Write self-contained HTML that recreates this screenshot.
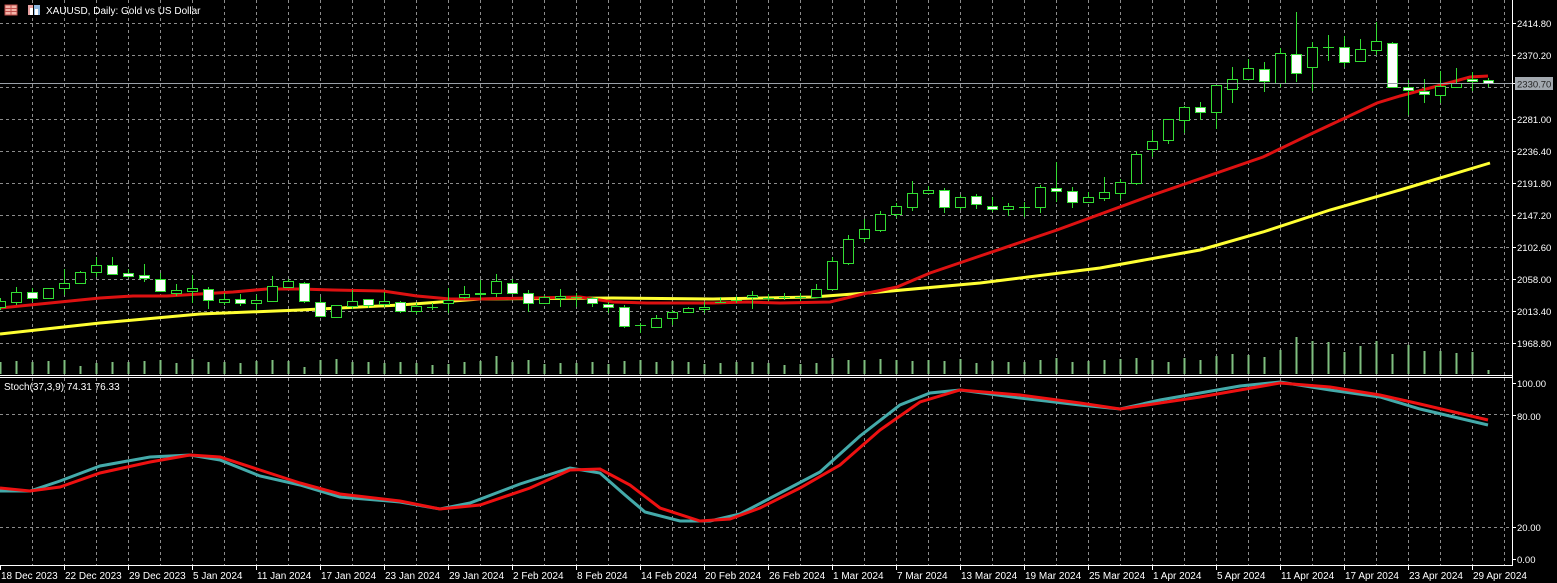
<!DOCTYPE html>
<html><head><meta charset="utf-8"><style>
html,body{margin:0;padding:0;background:#000;width:1557px;height:583px;overflow:hidden}
svg{display:block}
text{font-family:"Liberation Sans",sans-serif;fill:#fff}
</style></head><body>
<svg id="s" width="1557" height="583" xmlns="http://www.w3.org/2000/svg" shape-rendering="crispEdges">
<g id="grid"></g>
<g id="vol"></g>
<polyline fill="none" stroke="#ffff33" stroke-width="3" shape-rendering="auto" points="0,334 100,323 200,314 300,310 400,305 480,299 613,298 713,299 813,297 880,292 980,283 1100,268 1200,250 1263,232 1330,210 1400,190 1490,163"/>
<polyline fill="none" stroke="#dd1111" stroke-width="3" shape-rendering="auto" points="0,308 100,298 133,296 167,296 233,292 267,289 300,289 333,290 383,291 417,296 450,299 480,299 580,297 613,302 647,303 713,303 747,302 780,303 830,302 863,294 897,287 930,273 980,256 1057,230 1147,197 1263,157 1313,133 1377,103 1400,96 1430,88 1470,77 1488,76"/>
<g id="candles"></g>
<line x1="0" y1="83.5" x2="1512" y2="83.5" stroke="#9aa0a8"/>
<line x1="0" y1="375.5" x2="1512" y2="375.5" stroke="#fff"/>
<line x1="0" y1="377.5" x2="1512" y2="377.5" stroke="#fff"/>
<line x1="0" y1="565.5" x2="1513" y2="565.5" stroke="#fff"/>
<line x1="1512.5" y1="0" x2="1512.5" y2="566" stroke="#fff"/>
<polyline fill="none" stroke="#44aaaa" stroke-width="3" shape-rendering="auto" points="0,491 30,491 60,481 100,466 150,457 190,455 220,460 260,476 300,485 340,497 400,502 440,509 470,503 520,484 570,468 600,473 625,495 645,512 680,521 710,521 740,514 780,493 820,472 860,436 900,405 930,393 960,390 1020,398 1080,405 1120,409 1160,400 1200,393 1240,386 1280,382 1330,390 1380,397 1420,409 1488,425"/>
<polyline fill="none" stroke="#ee1111" stroke-width="3" shape-rendering="auto" points="0,488 30,491 60,487 100,473 150,462 190,455 220,457 260,470 300,483 340,494 400,501 440,509 480,505 530,488 570,470 600,469 630,485 660,508 700,521 730,519 760,508 800,488 840,465 880,430 920,402 960,390 1020,395 1080,403 1120,409 1160,403 1200,397 1240,390 1280,383 1330,387 1380,395 1420,404 1488,420"/>
<g shape-rendering="auto">
<rect x="5" y="5" width="12" height="10" fill="#f3b3a8" stroke="#c0504d"/>
<line x1="5" y1="8.5" x2="17" y2="8.5" stroke="#c0504d"/><line x1="5" y1="11.5" x2="17" y2="11.5" stroke="#c0504d"/><line x1="11" y1="5" x2="11" y2="15" stroke="#c0504d"/>
<rect x="28" y="5" width="5" height="10" fill="#e8a0a0"/><rect x="34" y="5" width="6" height="10" fill="#8fb8e0"/><rect x="30" y="8" width="3" height="7" fill="#fff"/><rect x="35" y="9" width="3" height="6" fill="#fff"/>
</g>
<text x="46" y="14" font-size="10">XAUUSD, Daily:  Gold vs US Dollar</text>
<text x="4" y="390" font-size="10">Stoch(37,3,9) 74.31 76.33</text>
<g id="ticks" stroke="#fff"></g>
<g font-size="9.5">
<text x="1517" y="27">2414.80</text>
<text x="1517" y="59">2370.20</text>
<text x="1517" y="123">2281.00</text>
<text x="1517" y="155">2236.40</text>
<text x="1517" y="187">2191.80</text>
<text x="1517" y="219">2147.20</text>
<text x="1517" y="251">2102.60</text>
<text x="1517" y="283">2058.00</text>
<text x="1517" y="315">2013.40</text>
<text x="1517" y="347">1968.80</text>
<text x="1517" y="387">100.00</text>
<text x="1517" y="420">80.00</text>
<text x="1517" y="531">20.00</text>
<text x="1517" y="563">0.00</text>
</g>
<rect x="1515" y="77" width="38" height="13" fill="#a3a9b0"/>
<text x="1517" y="87.5" font-size="9.5" style="fill:#222">2330.70</text>
<g font-size="10" id="dates">
<text x="1" y="579">18 Dec 2023</text><text x="65" y="579">22 Dec 2023</text><text x="129" y="579">29 Dec 2023</text><text x="193" y="579">5 Jan 2024</text><text x="257" y="579">11 Jan 2024</text><text x="321" y="579">17 Jan 2024</text><text x="385" y="579">23 Jan 2024</text><text x="449" y="579">29 Jan 2024</text><text x="513" y="579">2 Feb 2024</text><text x="577" y="579">8 Feb 2024</text><text x="641" y="579">14 Feb 2024</text><text x="705" y="579">20 Feb 2024</text><text x="769" y="579">26 Feb 2024</text><text x="833" y="579">1 Mar 2024</text><text x="897" y="579">7 Mar 2024</text><text x="961" y="579">13 Mar 2024</text><text x="1025" y="579">19 Mar 2024</text><text x="1089" y="579">25 Mar 2024</text><text x="1153" y="579">1 Apr 2024</text><text x="1217" y="579">5 Apr 2024</text><text x="1281" y="579">11 Apr 2024</text><text x="1345" y="579">17 Apr 2024</text><text x="1409" y="579">23 Apr 2024</text><text x="1473" y="579">29 Apr 2024</text>
</g>
</svg>
<script>
var NS="http://www.w3.org/2000/svg";
function el(p,t,a){var e=document.createElementNS(NS,t);for(var k in a)e.setAttribute(k,a[k]);p.appendChild(e);return e;}
var g=document.getElementById('grid');
var dash={stroke:"#8c8c8c","stroke-dasharray":"3,3","stroke-width":1};
for(var x=32;x<1512;x+=32){el(g,'line',Object.assign({x1:x+.5,y1:0,x2:x+.5,y2:375},dash));el(g,'line',Object.assign({x1:x+.5,y1:378,x2:x+.5,y2:565},dash));}
for(var y=23;y<=343;y+=32){el(g,'line',Object.assign({x1:0,y1:y+.5,x2:1512,y2:y+.5},dash));}
[414,527].forEach(function(y){el(g,'line',Object.assign({x1:0,y1:y+.5,x2:1512,y2:y+.5},dash));});
var t=document.getElementById('ticks');
[23,55,83,119,151,183,215,247,279,311,343,383,415,527,559].forEach(function(y){el(t,'line',{x1:1512,y1:y+.5,x2:1516,y2:y+.5});});
for(var x=0;x<=1472;x+=64){el(t,'line',{x1:x+.5,y1:565,x2:x+.5,y2:570});}
var D=[[301,307,298,310,0],[292,302,287,305,0],[292,298,288,302,1],[288,298,288,298,0],[283,288,269,295,0],[272,283,271,283,0],[265,272,257,277,0],[265,274,257,274,1],[273,276,269,278,1],[275,278,264,282,1],[279,291,273,292,1],[290,293,284,296,0],[288,291,275,303,0],[289,300,287,309,1],[299,302,293,305,0],[299,303,294,306,1],[300,303,295,310,0],[286,301,276,301,0],[281,287,279,287,0],[283,301,282,303,1],[302,316,297,317,1],[305,317,305,317,0],[301,306,290,309,0],[299,305,299,308,1],[301,304,292,307,0],[302,311,301,313,1],[306,311,303,314,0],[307,307,303,310,0],[300,303,288,313,0],[294,297,286,299,0],[293,294,280,300,0],[281,293,274,297,0],[283,293,279,294,1],[293,303,290,312,1],[297,303,295,304,0],[296,298,289,307,0],[297,297,293,307,0],[298,303,297,307,1],[304,307,302,313,1],[307,326,305,328,1],[325,325,323,333,0],[318,327,315,328,0],[312,318,310,325,0],[308,312,307,313,0],[307,309,302,313,0],[302,302,297,303,0],[300,300,296,303,0],[295,297,291,309,0],[298,298,294,301,0],[297,297,293,300,0],[297,297,293,301,0],[289,297,284,297,0],[261,289,257,290,0],[239,263,235,265,0],[229,238,219,242,0],[214,230,211,232,0],[206,214,203,218,0],[193,207,181,211,0],[190,193,186,194,0],[190,207,188,213,1],[197,207,195,210,0],[196,204,194,209,1],[206,209,197,212,1],[206,209,203,216,0],[207,207,202,217,0],[187,207,185,213,0],[188,191,162,202,1],[191,202,187,208,1],[197,202,192,203,0],[192,198,177,201,0],[182,193,179,199,0],[154,183,151,185,0],[141,149,130,157,0],[119,140,119,144,0],[107,120,106,133,0],[107,112,102,120,1],[85,112,85,129,0],[79,89,67,103,0],[68,79,59,80,0],[69,81,62,92,1],[53,83,48,87,0],[54,73,12,82,1],[47,67,42,91,0],[47,47,35,61,0],[47,62,36,67,1],[49,61,39,61,0],[41,50,22,55,0],[43,87,42,88,1],[87,90,80,115,1],[91,94,79,103,1],[86,95,71,103,0],[83,87,68,88,0],[79,81,72,91,1],[80,83,78,87,1]];
var c=document.getElementById('candles'),v=document.getElementById('vol');
var VH=[12,13,12,13,14,8,11,12,12,13,14,11,15,12,12,11,13,14,13,7,14,15,12,12,11,12,11,9,10,12,13,18,12,14,10,11,11,12,10,13,14,12,13,12,10,11,12,12,11,9,10,11,16,14,14,15,14,13,14,13,15,11,13,12,12,14,16,12,13,14,15,16,14,12,16,14,18,20,19,17,24,37,33,32,22,28,33,20,29,23,23,21,22,4];
for(var i=0;i<D.length;i++){var d=D[i],x=16*i;
el(v,'line',{x1:x+.5,y1:374-VH[i],x2:x+.5,y2:374,stroke:"#7fbf7f","stroke-width":2});
el(c,'line',{x1:x+.5,y1:d[2],x2:x+.5,y2:d[3],stroke:"#33dd33"});
if(d[1]-d[0]<1){el(c,'line',{x1:x-5,y1:d[0]+.5,x2:x+6,y2:d[0]+.5,stroke:"#33dd33"});}
else el(c,'rect',{x:x-4.5,y:d[0]+.5,width:10,height:d[1]-d[0],fill:d[4]?"#ffffff":"#000",stroke:"#33dd33"});}
</script>
</body></html>
